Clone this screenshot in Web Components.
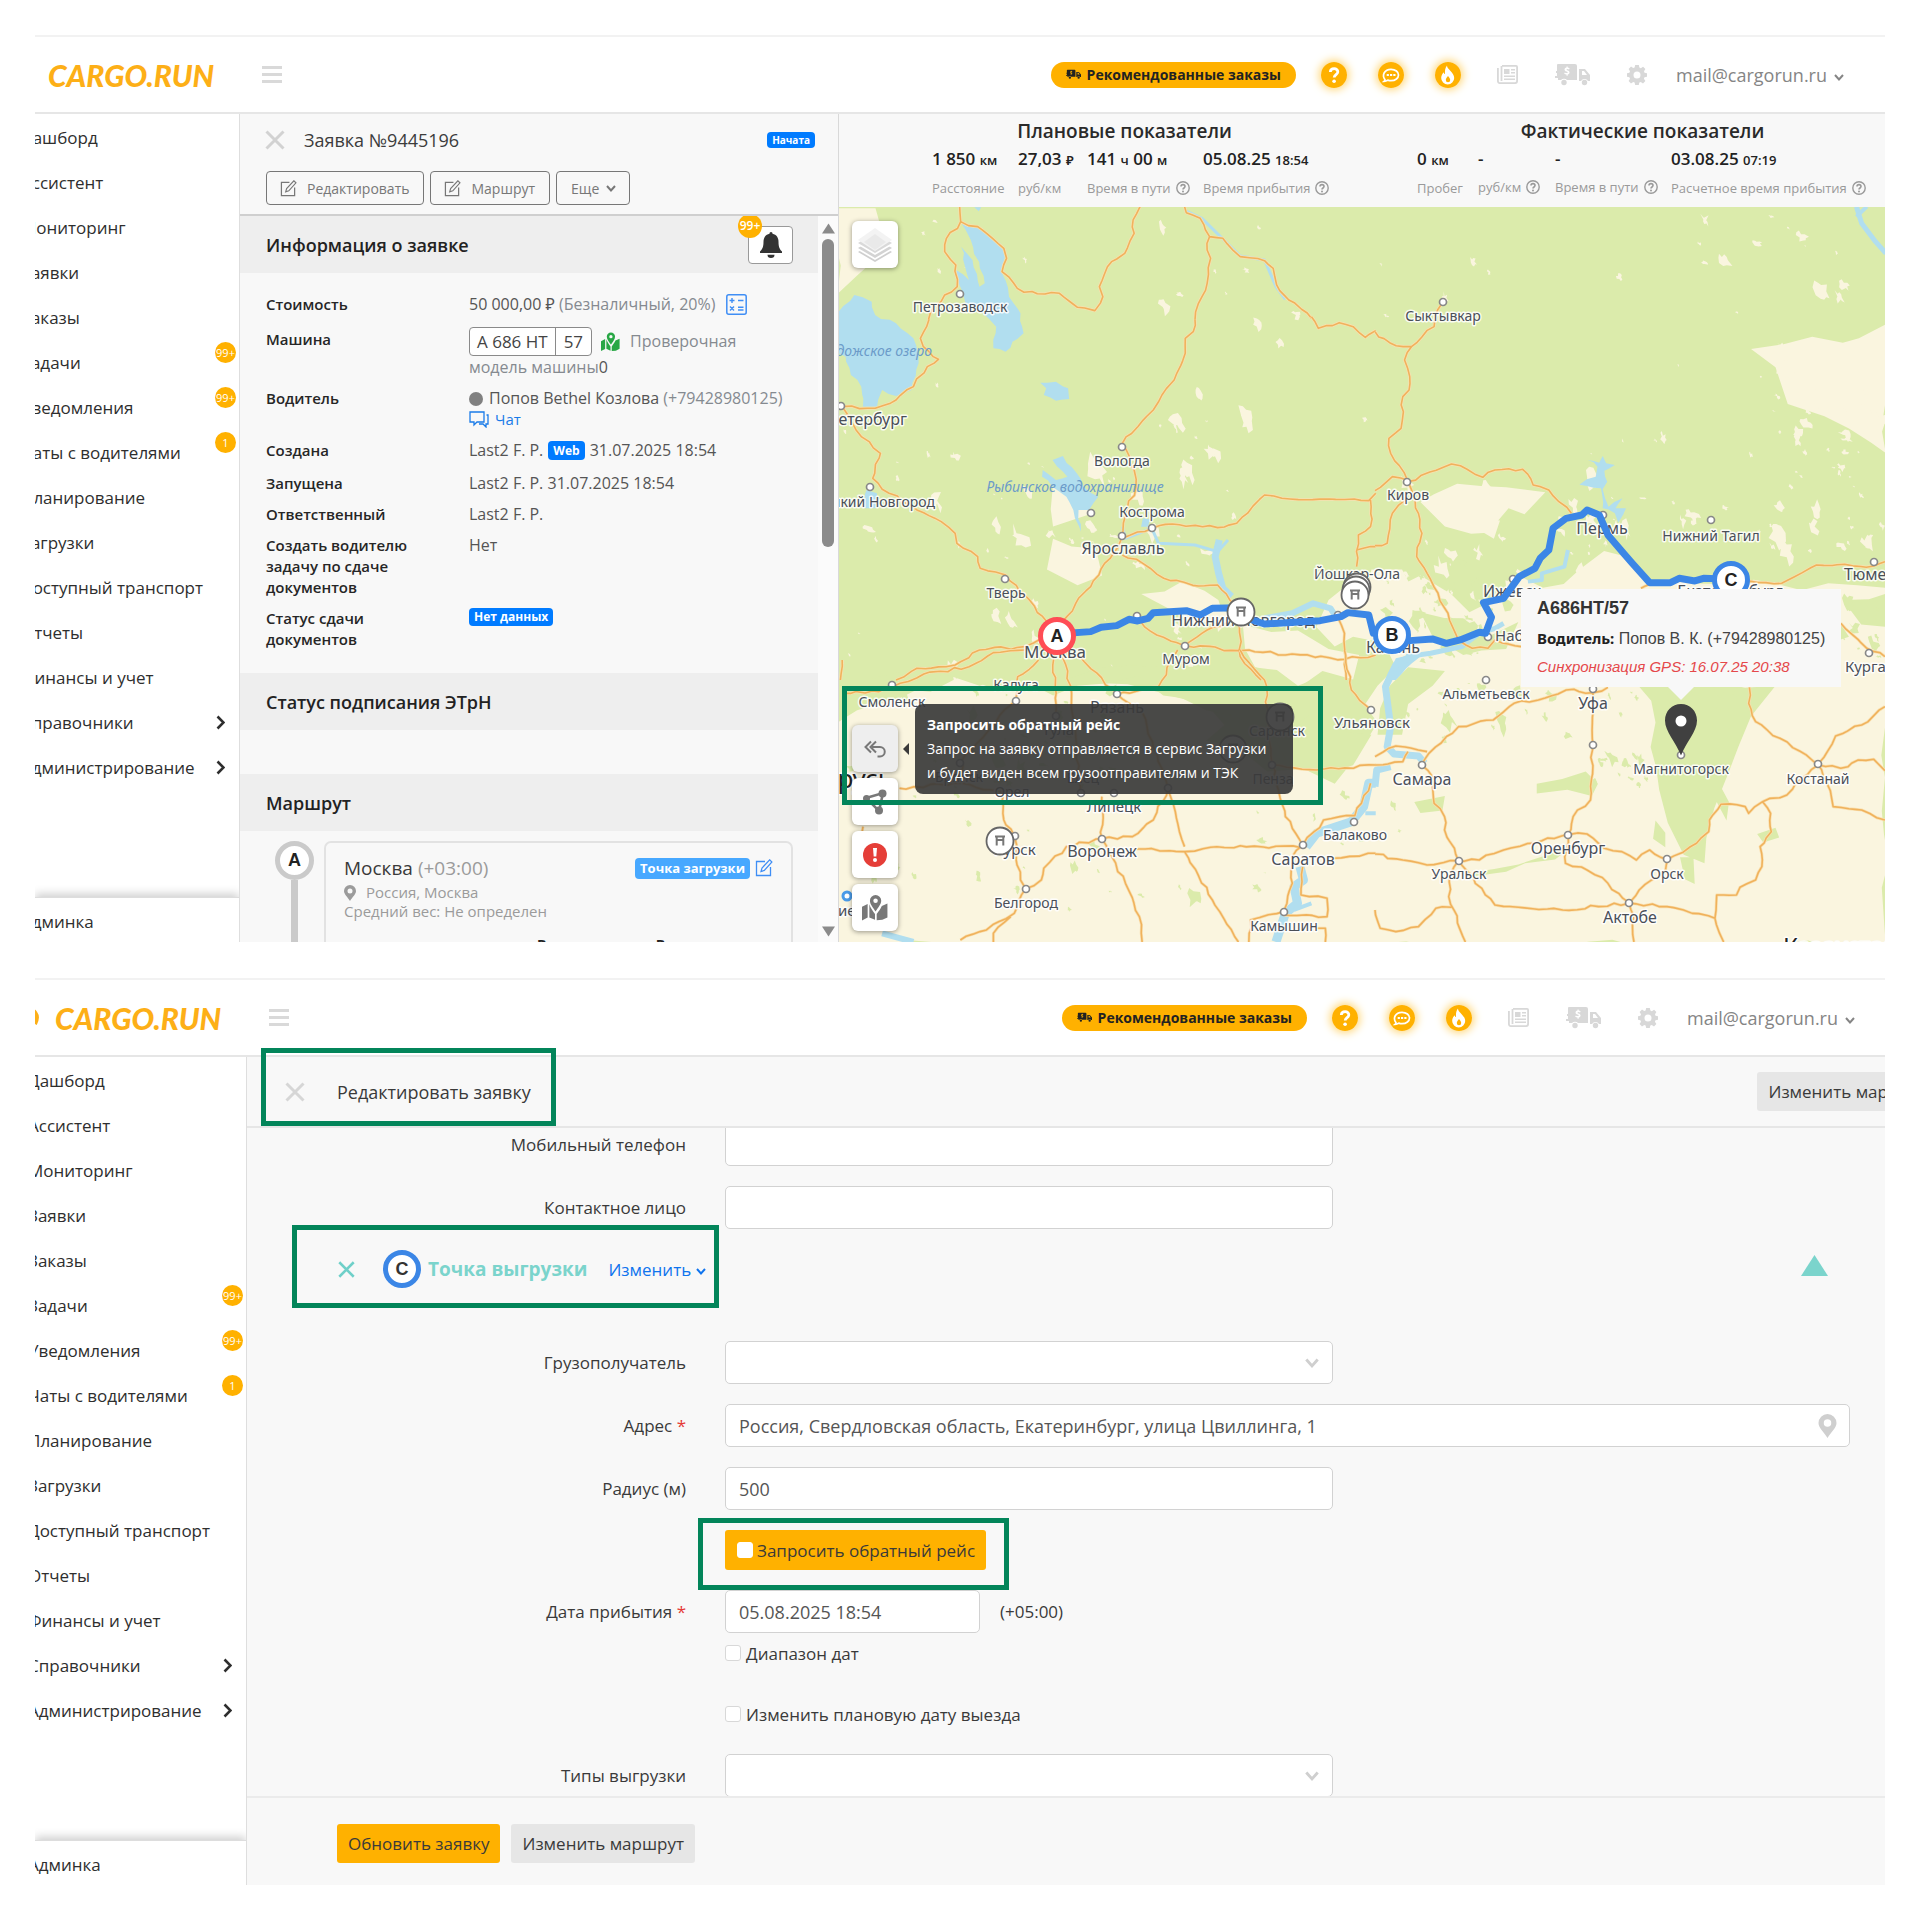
<!DOCTYPE html>
<html lang="ru">
<head>
<meta charset="utf-8">
<title>CARGO.RUN</title>
<style>
*{box-sizing:border-box}
body{margin:0;padding:35px;background:#fff;color:#2b2b2b;font-family:"Open Sans","Noto Sans",sans-serif;font-size:17px;display:flex;flex-direction:column;gap:36px}
app-shot.order{--crop:14px;--side:205px;--head-right:41px;--logo-pad:13px}
app-shot.edit{--crop:7px;--side:212px;--head-right:30px;--logo-pad:20px}
</style>
</head>
<body>
<app-shot class="order">
  <top-bar slot="head"></top-bar>
  <side-nav></side-nav>
  <order-panel></order-panel>
  <map-pane></map-pane>
  <mark-frame slot="marks" style="left:807px;top:651px;width:481px;height:119px"></mark-frame>
</app-shot>
<app-shot class="edit">
  <top-bar slot="head"></top-bar>
  <side-nav></side-nav>
  <edit-form></edit-form>
  <mark-frame slot="marks" style="left:226px;top:70px;width:295px;height:78px"></mark-frame>
  <mark-frame slot="marks" style="left:257px;top:247px;width:427px;height:83px"></mark-frame>
  <mark-frame slot="marks" style="left:663px;top:540px;width:311px;height:72px"></mark-frame>
</app-shot>

<script>
const BASE = '*{box-sizing:border-box}button,input,select{font:inherit;color:inherit;margin:0}button{cursor:pointer}a{color:inherit;text-decoration:none}';
function define(name, html) {
  customElements.define(name, class extends HTMLElement {
    constructor() {
      super();
      this.attachShadow({mode: 'open'}).innerHTML = '<style>' + BASE + '</style>' + (typeof html === 'function' ? html(this) : html);
    }
  });
}

/* ---------- icons ---------- */
const MAP_ICON = '<path fill="currentColor" d="M0 10.5 5 8v12l-5 2.500zM6.500 8.200c1 3.200 3 6 5 8.600V22l-5-2.200zM13 16.800c2-2.600 3.500-4.500 4.500-7l5-2.200v12.200L18 22l-5 .3z"/><path fill="currentColor" fill-rule="evenodd" d="M12 0a5 5 0 0 1 5 5c0 3-3 6.500-5 9.500C10 11.500 7 8 7 5a5 5 0 0 1 5-5zm0 3a2 2 0 1 0 0 4 2 2 0 0 0 0-4z"/>';
const TRUCK = '<path fill="currentColor" fill-rule="evenodd" d="M3 0h17a2 2 0 0 1 2 2v14H12a4 4 0 0 0-6 0H3v-2H0v-2h2V9H1V7h1V1a1 1 0 0 1 1-1zm8.500 2.500v1c-2.600.5-2.600 3.400 0 4 1.700.4 1.500 1.600.3 1.600-.8 0-1.400-.3-2-.7l-.6 1.300c.7.5 1.400.8 2.300.9v1.200h1.200v-1.200c2.400-.5 2.500-3.400 0-4-1.600-.4-1.400-1.500-.3-1.500.6 0 1.200.2 1.700.5l.5-1.300c-.6-.4-1.200-.6-1.900-.7V2.500zM24 5h6l5 6v6h-2a4 4 0 0 0-7 0h-2zm3 2v4h5l-3-4z"/><circle cx="9" cy="18.500" r="2.700" fill="currentColor"/><circle cx="29.500" cy="18.500" r="2.700" fill="currentColor"/>';
const ICONS = {
  menu: ['0 0 20 17', '<path fill="currentColor" d="M0 0h20v3H0zM0 7h20v3H0zM0 14h20v3H0z"/>'],
  close: ['0 0 20 20', '<path d="M1.500 1.500l17 17M18.500 1.500l-17 17" stroke="currentColor" stroke-width="3" fill="none"/>'],
  edit: ['0 0 18 18', '<path d="M10 2.500H1.500v14h14V8" fill="none" stroke="currentColor" stroke-width="1.300"/><path d="M6 12.500l1-3.500 7.700-8.200 2.200 2.200L9.300 11.400z" fill="none" stroke="currentColor" stroke-width="1.200"/>'],
  down: ['0 0 10 7', '<path d="M1 1l4 4.500L9 1" fill="none" stroke="currentColor" stroke-width="2"/>'],
  right: ['0 0 9 15', '<path d="M1.500 1.500l6 6-6 6" fill="none" stroke="currentColor" stroke-width="2.600"/>'],
  bell: ['0 0 22 26', '<path fill="currentColor" d="M11 0c1 0 1.500.8 1.500 1.800 4 .7 6 4 6 8 0 6 1.500 7.700 3.500 9.700V21H0v-1.500c2-2 3.500-3.700 3.500-9.700 0-4 2-7.300 6-8C9.500.8 10 0 11 0zM7.500 22.800h7a3.500 3.200 0 0 1-7 0z"/>'],
  calc: ['0 0 21 21', '<rect x=".8" y=".8" width="19.400" height="19.400" rx="2" fill="none" stroke="currentColor" stroke-width="1.500"/><path d="M3.500 6.500h5M6 4v5M12 6.500h5.500M4 12.500l4 4M8 12.500l-4 4M12 13.300h5.500M12 16h5.500" stroke="currentColor" stroke-width="1.400" fill="none"/>'],
  map: ['0 0 23 23', MAP_ICON],
  chat: ['0 0 20 17', '<path d="M1 1h14v10H8l-3 3v-3H1zM17.500 4H19v9h-2v3l-3-3h-4" fill="none" stroke="currentColor" stroke-width="1.300"/>'],
  pin: ['0 0 12 16', '<path fill="currentColor" fill-rule="evenodd" d="M6 0a6 6 0 0 1 6 6c0 3-3.500 6-6 10C3.500 12 0 9 0 6a6 6 0 0 1 6-6zm0 3.500a2.500 2.500 0 1 0 0 5 2.500 2.500 0 0 0 0-5z"/>'],
  truck: ['0 0 35 22', TRUCK],
  help: ['0 0 14 14', '<circle cx="7" cy="7" r="6.200" fill="none" stroke="currentColor" stroke-width="1.400"/><path d="M5 5.500C5 3 9 3 9 5.500 9 7 7 7 7 8.500" fill="none" stroke="currentColor" stroke-width="1.600"/><circle cx="7" cy="10.500" r="1" fill="currentColor"/>'],
  q: ['0 0 26 26', '<circle cx="13" cy="13" r="13" fill="#ffb100"/><path d="M9.300 10c.3-4.500 7.700-4.300 7.500 0-.1 2.600-3.600 2.700-3.600 5.500" fill="none" stroke="#fff" stroke-width="2.800"/><circle cx="13.100" cy="19.300" r="1.800" fill="#fff"/>'],
  msg: ['0 0 26 26', '<circle cx="13" cy="13" r="13" fill="#ffb100"/><path d="M7 17.800C3.500 13 6.500 7.300 13 7.300c4.500 0 7.500 2.600 7.500 5.700s-3 5.700-7.500 5.700c-1.200 0-2.200-.2-3.200-.6-1.300.9-2.700 1.200-3.800 1.200.6-.5.900-1 1-1.500z" fill="none" stroke="#fff" stroke-width="1.700"/><path d="M8.700 11.900h2.200v2.200H8.700zM12 11.900h2.200v2.200H12zM15.300 11.900h2.200v2.200h-2.200z" fill="#fff"/>'],
  fire: ['0 0 26 26', '<circle cx="13" cy="13" r="13" fill="#ffb100"/><path fill="#fff" fill-rule="evenodd" d="M12 3.500c-.2 3.800 7.200 6.800 7.200 12.500a6.500 6.500 0 0 1-13 0c0-2.300 1-4.200 2.500-5.800.2 1.200.7 1.700 1.300 1.900C9.800 9 10 6 12 3.500zm1 10.500c-1.100 1.400-2.200 2.400-2.200 4a2.200 2.200 0 0 0 4.400 0c0-1.600-1.100-2.600-2.200-4z"/>'],
  news: ['0 0 21 19', '<path fill="none" stroke="currentColor" stroke-width="1.800" d="M5 .9h14.100a1 1 0 0 1 1 1v14.200a2 2 0 0 1-2 2H3a2 2 0 0 1-2.100-2V3"/><path fill="none" stroke="currentColor" stroke-width="1.800" d="M4.500 1v15"/><path fill="currentColor" d="M7 4h5.500v5H7zM14 4h4v1.500h-4zM14 7h4v1.500h-4zM7 10.500h11V12H7zM7 13.500h11V15H7z"/>'],
  gear: ['0 0 20 20', '<path fill="currentColor" fill-rule="evenodd" d="M8.200 0h3.600l.6 2.600 1.400.6L16.100 1.800l2.300 2.300L17 6.300l.5 1.500 2.500.5v3.500l-2.500.5-.6 1.500 1.500 2.200-2.400 2.400-2.200-1.500-1.500.6-.5 2.500H8.200l-.6-2.500-1.400-.6L4 18.400 1.600 16 3 13.800l-.6-1.500L0 11.800V8.200l2.400-.5.600-1.400L1.600 4 4 1.600 6.200 3l1.400-.5zM10 6.500a3.500 3.500 0 1 0 0 7 3.500 3.500 0 0 0 0-7z"/>'],
  layers: ['0 0 36 36', '<path fill="#cfcfcf" d="M1 25l17-10 17 10-17 10z"/><path fill="#fff" d="M1 23l17-10 17 10-17 10z"/><path fill="#d3d3d3" d="M1 21l17-10 17 10-17 10z"/><path fill="#fff" d="M1 18l17-10 17 10-17 10z"/><path fill="#d9d9d9" d="M1 16l17-10 17 10-17 10z"/><path fill="#f3f3f3" d="M1 13L18 1l17 12-17 11z"/><path fill="#e9e9e9" d="M7 15l11-8 11 8-11 8z"/>'],
  back: ['0 0 22 18', '<path d="M7 1.500L1.500 7 7 12.500M12 1.500L6.500 7l5.500 5.500M8 7h8a4.500 4.500 0 0 1 0 9.500h-2.500" fill="none" stroke="currentColor" stroke-width="2"/>'],
  share: ['0 0 24 26', '<path d="M3 9L20 4l-4 18z" fill="none" stroke="currentColor" stroke-width="2.600"/><circle cx="3.500" cy="9.500" r="3.500" fill="currentColor"/><circle cx="19.500" cy="4.500" r="4" fill="currentColor"/><circle cx="16" cy="21.500" r="4" fill="currentColor"/>'],
  alert: ['0 0 24 24', '<circle cx="12" cy="12" r="12" fill="#e53e38"/><path d="M10 5h4l-.7 8.500h-2.600z" fill="#fff"/><circle cx="12" cy="17" r="2" fill="#fff"/>'],
  up: ['0 0 27 21', '<path fill="currentColor" d="M13.500 0L27 21H0z"/>']
};
define('ui-icon', el => {
  const [box, body] = ICONS[el.getAttribute('name')];
  const [, , w, h] = box.split(' ');
  return `<style>:host{display:inline-block;flex:none;width:${w}px;height:${h}px}svg{display:block;width:100%;height:100%}</style><svg viewBox="${box}" aria-hidden="true">${body}</svg>`;
});

/* ---------- frame of one screen ---------- */
define('app-shot', `<style>
:host{display:flex;flex-direction:column;position:relative;height:907px;overflow:hidden}
.body{display:flex;flex:1;min-height:0}
</style><slot name="head"></slot><div class="body"><slot></slot></div><slot name="marks"></slot>`);

define('mark-frame', `<style>:host{display:block;position:absolute;border:5px solid #03855a;pointer-events:none;z-index:5}</style>`);

define('top-bar', `<style>
:host{display:flex;align-items:center;height:79px;flex:none;border-top:2px solid #f2f2f2;border-bottom:2px solid #e6e6e6;padding-right:var(--head-right);background:#fff}
.mark{width:var(--logo-pad);height:20px;overflow:hidden;display:flex;justify-content:flex-start}
.mark svg{flex:none;margin-left:calc(var(--logo-pad) - 32px)}
.brand{display:flex;align-items:center;width:227px}
:host-context(.edit) .brand{width:234px}
b{font:italic 900 30px/36px Lato,sans-serif;color:#fdaf17}
.menu{border:0;background:none;padding:0;color:#d9d9d9;display:flex}
.right{margin-left:auto;display:flex;align-items:center;gap:31px;color:#d8d8d8}
.pill{border:0;background:#ffb100;color:#222;border-radius:13px;height:26px;padding:0 15px;margin-right:-6px;display:flex;align-items:center;gap:6px;font-weight:700;font-size:14px}
.pill ui-icon{width:15px;height:11px}
.round{border:0;padding:0;background:none;border-radius:50%;display:flex;box-shadow:0 0 9px 2px #ffd779}
.flat{border:0;padding:0 3px;background:none;display:flex;color:inherit}
.mail{display:flex;align-items:center;gap:7px;color:#858585;font-size:18px;margin-left:-5px}
.mail ui-icon{margin-top:5px}
.round+.flat{padding-left:5px}
</style>
<div class="brand"><span class="mark"><svg width="18" height="20" viewBox="0 0 18 20"><path d="M3 2c8-2 14 5 9 14" fill="none" stroke="#fdaf17" stroke-width="4"/></svg></span><b>CARGO.RUN</b></div>
<button class="menu" aria-label="Меню"><ui-icon name="menu"></ui-icon></button>
<div class="right">
<button class="pill"><ui-icon name="truck"></ui-icon>Рекомендованные заказы</button>
<button class="round" aria-label="Помощь"><ui-icon name="q"></ui-icon></button>
<button class="round" aria-label="Чат"><ui-icon name="msg"></ui-icon></button>
<button class="round" aria-label="Новинки"><ui-icon name="fire"></ui-icon></button>
<button class="flat" aria-label="Новости"><ui-icon name="news"></ui-icon></button>
<button class="flat" aria-label="Заказы"><ui-icon name="truck"></ui-icon></button>
<button class="flat" aria-label="Настройки"><ui-icon name="gear"></ui-icon></button>
<a class="mail" href="#">mail@cargorun.ru<ui-icon name="down"></ui-icon></a>
</div>`);

const NAV = [['Дашборд'],['Ассистент'],['Мониторинг'],['Заявки'],['Заказы'],['Задачи','99+'],['Уведомления','99+'],['Чаты с водителями','1'],['Планирование'],['Загрузки'],['Доступный транспорт'],['Отчеты'],['Финансы и учет'],['Справочники','>'],['Администрирование','>']];
define('side-nav', `<style>
:host{display:flex;flex-direction:column;flex:none;width:var(--side);border-right:1px solid #dedede;background:#fff;font-size:17px;color:#2e2e2e;overflow:hidden}
nav{display:flex;flex-direction:column;padding-top:1px}
a{display:flex;align-items:center;height:45px;margin-left:calc(0px - var(--crop));position:relative;white-space:nowrap}
i{position:absolute;right:3px;top:2px;width:21px;height:21px;border-radius:50%;background:#ffb100;color:#fff;font:normal 11px/21px "Open Sans",sans-serif;text-align:center}
ui-icon{position:absolute;right:14px;top:15px}
footer{margin-top:auto;border-top:1px solid #ddd;height:45px;box-shadow:0 -3px 9px rgba(0,0,0,.2)}
footer a{height:47px}
</style><nav>${NAV.map(([t,b]) => `<a href="#">${t}${b === '>' ? '<ui-icon name="right"></ui-icon>' : b ? `<i>${b}</i>` : ''}</a>`).join('')}</nav><footer><a href="#">Админка</a></footer>`);

/* ---------- order card ---------- */
define('order-panel', `<style>
:host{display:flex;flex-direction:column;flex:none;width:599px;background:#f8f8f8;border-right:1px solid #d9d9d9;min-height:0}
header{height:102px;flex:none;border-bottom:2px solid #cfcfcf;padding:12px 23px 0 26px;display:flex;flex-direction:column;gap:17px}
.t{display:flex;align-items:center;font-size:18px;line-height:28px;height:28px;color:#3c3c3c}
.t button{border:0;background:none;padding:0;color:#d2d2d2;display:flex;margin:0 19px 0 -1px}
.tag{background:#007bff;color:#fff;font-weight:700;border-radius:4px;font-size:12px;line-height:18px;padding:0 5px;display:inline-block}
.t .tag{margin-left:auto;font-size:10px;line-height:16px}
.b{display:flex;gap:6px}
.b button{height:34px;border:1px solid #777;border-radius:4px;background:none;color:#777;font-size:14px;display:flex;align-items:center;padding:0 14px 0 13px;gap:10px}
.b button:last-child{gap:7px;padding:0 13px 0 14px}
.b ui-icon[name=edit]{width:17px;height:17px}
.scroll{display:flex;flex:1;min-height:0}
.c{flex:1;min-width:0;overflow:hidden}
h2{margin:0;background:#eee;height:57px;padding:0 25px 0 26px;display:flex;align-items:center;justify-content:space-between;font-size:18px;font-weight:600;color:#222;position:relative}
.bell{width:45px;height:38px;border:1px solid #999;border-radius:4px;background:#fff;color:#333;display:flex;align-items:center;justify-content:center;position:relative;padding:0}
.bell i{position:absolute;left:-11px;top:-13px;width:24px;height:24px;border-radius:50%;background:#ffb100;color:#fff;font:normal 600 12px/24px "Open Sans",sans-serif}
dl{margin:0;padding:21px 0 23px 26px;display:grid;grid-template-columns:203px 1fr;row-gap:10px;font-size:16px;line-height:21px;color:#555}
dt{font-weight:600;font-size:15px;color:#262626;padding-right:40px}
dt.low{padding-top:4px}
dd{margin:0;color:#555;white-space:nowrap}
dd div{display:flex;align-items:center}
.g{color:#858a90}
.cost ui-icon{color:#3f8ef5;margin-left:11px;margin-block:-1px}
.car{padding:2px 0 1px}
.plate{border:1px solid #8a8a8a;border-radius:4px;background:#fff;height:29px;display:inline-flex;font-size:17px;line-height:27px;color:#444}
.plate span{padding:0 7px}.plate span+span{border-left:1px solid #8a8a8a;padding:0 8px}
.car ui-icon{width:19px;height:20px;color:#28a745;margin:0 10px 0 9px}
.dot{width:14px;height:14px;border-radius:50%;background:#808080;margin-right:6px}
.chat{color:#1a7be8;font-size:15px;display:flex;gap:6px;align-items:center}
.web{margin:0 5px;line-height:19px}
.made{padding-bottom:2px}
.gap{height:44px}
.route{display:flex;padding:10px 25px 0 35px;gap:10px;height:160px}
.line{width:39px;display:flex;flex-direction:column;align-items:center}
.line b{width:39px;height:39px;border:5px solid #cacaca;border-radius:50%;background:#fff;display:flex;align-items:center;justify-content:center;font:700 18px "Liberation Sans",sans-serif;color:#222;flex:none}
.line:after{content:"";width:7px;flex:1;background:#cacaca}
.card{flex:1;border:2px solid #e2e2e2;border-radius:7px;padding:10px 18px 0}
.h{display:flex;align-items:center;font-size:19px;line-height:30px;color:#3a3a3a;gap:5px}
.h span{color:#9b9b9b}.h .tag{margin-left:auto;background:#47a8ff;color:#fff;font-size:13px;line-height:21px;padding:0 5px}
.h ui-icon{color:#3f8ef5}
.s{color:#9b9b9b;font-size:15px;line-height:19px;display:flex;align-items:center;gap:10px}
.s ui-icon{height:16px}
.cols{display:flex;margin-top:14px;font-weight:700;font-size:14px;line-height:20px;color:#222;gap:74px;padding-left:193px}
.bar{width:20px;background:#fbfbfb;display:flex;flex-direction:column;align-items:center;padding:7px 0 5px;color:#8b8b8b}
.bar ui-icon{width:13px;height:11px}
.bar ui-icon:last-child{transform:rotate(180deg);margin-top:auto}
.bar span{width:12px;height:308px;border-radius:6px;background:#8b8b8b;margin-top:5px}
</style>
<header><div class="t"><button aria-label="Закрыть"><ui-icon name="close"></ui-icon></button>Заявка №9445196<span class="tag">Начата</span></div>
<div class="b"><button><ui-icon name="edit"></ui-icon>Редактировать</button><button><ui-icon name="edit"></ui-icon>Маршрут</button><button>Еще<ui-icon name="down"></ui-icon></button></div></header>
<div class="scroll"><div class="c">
<h2>Информация о заявке<button class="bell" aria-label="Уведомления"><i>99+</i><ui-icon name="bell"></ui-icon></button></h2>
<dl>
<dt>Стоимость</dt><dd><div class="cost">50 000,00 ₽&nbsp;<span class="g">(Безналичный, 20%)</span><ui-icon name="calc"></ui-icon></div></dd>
<dt class="low">Машина</dt><dd><div class="car"><span class="plate"><span>А 686 НТ</span><span>57</span></span><ui-icon name="map"></ui-icon><span class="g">Проверочная</span></div><div><span class="g">модель машины</span>0</div></dd>
<dt>Водитель</dt><dd><div><span class="dot"></span>Попов Bethel Козлова&nbsp;<span class="g">(+79428980125)</span></div><a class="chat" href="#"><ui-icon name="chat"></ui-icon>Чат</a></dd>
<dt>Создана</dt><dd class="made"><div>Last2 F. P.<span class="tag web">Web</span>31.07.2025 18:54</div></dd>
<dt>Запущена</dt><dd>Last2 F. P. 31.07.2025 18:54</dd>
<dt>Ответственный</dt><dd>Last2 F. P.</dd>
<dt>Создать водителю задачу по сдаче документов</dt><dd>Нет</dd>
<dt>Статус сдачи документов</dt><dd><div><span class="tag">Нет данных</span></div></dd>
</dl>
<h2>Статус подписания ЭТрН</h2><div class="gap"></div><h2>Маршрут</h2>
<div class="route"><div class="line"><b>A</b></div><div class="card"><div class="h">Москва <span>(+03:00)</span><span class="tag">Точка загрузки</span><ui-icon name="edit"></ui-icon></div>
<div class="s"><ui-icon name="pin"></ui-icon>Россия, Москва</div><div class="s">Средний вес: Не определен</div><div class="cols"><span>Въезд</span><span>Выезд</span></div></div></div>
</div><div class="bar"><ui-icon name="up"></ui-icon><span></span><ui-icon name="up"></ui-icon></div></div>`);

/* ---------- map ---------- */
define('stat-item', el => `<style>
:host{display:block}
p{margin:0;font-weight:600;font-size:17px;line-height:28px;color:#222;white-space:nowrap}
p ::slotted(small){font-size:13px}
span{display:flex;align-items:center;gap:5px;margin-top:4px;font-size:13px;line-height:20px;color:#9a9a9a;white-space:nowrap}
</style><p><slot></slot></p><span>${el.getAttribute('label')}${el.hasAttribute('help') ? '<ui-icon name="help"></ui-icon>' : ''}</span>`);

const at = (x, y) => `transform="translate(${x} ${y}) scale(.3476 .3333)"`;
const ROADS = [
 [830,20,'M373 560L376 605L335 655L330 695L362 735L366 800L330 825L300 860L283 900 M376 605L425 620L500 685L508 715L495 755L558 817L660 820L712 862L762 872L785 830L775 800L810 725L848 700L875 640L872 600L892 560 M1020 560L1025 578L1065 595L1092 650L1130 655L1180 710L1250 722L1275 745L1285 795L1320 840L1385 895 M1092 650L1085 690L1095 715L1085 790L1060 850L1050 900'],
 [830,280,'M285 118L278 140L260 175L285 215L312 238L280 260L240 320L190 360L130 385L35 380L75 450L145 520L123 595L170 640L250 690L320 725L360 760L365 790L425 830L432 865L505 885L560 945L650 1060 M1050 118L1045 155L1022 175L1022 220L990 300L955 345L930 390L841 490L875 570L880 620L855 690L841 768L830 800L790 850L750 920L715 955L650 1060 M841 775L926 745L985 732L1115 743L1170 730L1250 645L1300 655L1550 662L1570 640 M841 825L900 850L960 895L1060 918L1115 915L1150 960L1182 995 M1385 110L1405 145L1465 128L1505 140L1540 172L1570 152 M650 1060L560 1100L430 1110L360 1155L250 1165L190 1200 M880 1010L940 1065L1020 1097L1180 1112L1480 1138L1570 1125 M1020 1097L1085 1050L1182 1010L1180 1130L1240 1200 M1460 1010L1480 1060L1485 1200 M1555 660L1555 740L1520 765L1515 860 M1515 810L1570 800'],
 [1375,280,'M0 155L45 190L105 200L170 140L180 90L196 65 M105 200L85 240L100 290L98 330L80 350L75 445L40 475L45 520L93 600L125 700L135 760L120 830L150 880L210 1000L240 1080 M93 605L220 552L310 592L345 570L425 568L455 615L500 630L565 700 M0 632L50 590L93 600 M93 640L50 700L35 790L0 797 M1040 905L1170 910L1270 855L1435 858L1467 845 M765 925L800 910 M1340 1030L1415 1105L1467 1130 M240 1080L280 1105L325 1105L345 1080L420 1100'],
 [830,650,'M560 0L470 8L400 50L270 72L180 110L140 125L35 130 M35 30L30 90 M640 0L650 190 M600 30L540 80L534 150L380 330L375 400L200 415 M665 0L695 130L720 430 M720 20L826 133L900 190L972 415L1020 590 M1000 0L945 110L826 133 M1180 0L1250 90L1272 340 M1480 0L1500 120L1555 180 M1272 345L1400 360L1570 345 M380 400L500 430L500 510L530 558L548 690L563 716L608 690L615 655L680 590L782 566L782 440 M782 566L870 560L930 510L972 415 M782 566L850 700L890 800L898 876 M880 597L1020 605L1095 592L1350 592 M1020 605L1100 750L1175 876 M1360 586L1310 500L1290 420L1272 345 M1360 586L1420 510L1510 497L1555 400 M1360 586L1330 620L1330 700L1305 785L1210 810L1205 876 M1360 650L1355 735L1430 745L1430 800L1305 795 M1400 835L1425 835L1425 876 M563 716L530 790L450 840L375 870 M520 800L470 850L470 876 M1450 625L1570 610 M95 530L90 560'],
 [1375,650,'M134 345L155 310L240 230L340 210L400 160L470 150L550 120L627 128L670 112 M627 118L627 285L620 450L570 500L556 554L548 640L610 660L670 700L731 758 M556 554L480 572L370 600L300 630L240 632L150 645L80 630L0 612 M134 345L165 380L170 460L200 500L200 540L240 632L345 765L540 780L731 760L840 770L978 805L1003 876 M240 632L215 680L212 740L260 876 M220 772L175 775L125 830L60 845L15 835L0 780 M556 554L610 552L660 595L710 605L752 630L790 600L841 628L925 580L960 545L962 510L995 463L1065 470L1075 490L1115 455L1185 435L1210 400L1275 345L1165 265L1095 215L1075 160L1077 112 M841 628L835 665L760 720L731 760L745 800L745 876 M1115 455L1138 490L1140 545L1108 590L1113 650L1095 690L1050 712L1040 735L983 735L978 805 M1275 342L1325 258L1400 225L1467 170 M1275 345L1340 355L1390 330L1435 328L1467 362 M1275 345L1300 400L1318 470L1400 480L1467 510 M0 320L60 288L150 305 M0 345L80 335L95 305']
];
/* breaks long straight road segments into small natural bends */
let seed = 7;
const rnd = () => (seed = (seed * 16807) % 2147483647) / 2147483647;
function bend(d) {
  return d.split(' M').map((part, n) => {
    const pts = part.replace('M', '').split('L').map(p => p.trim().split(/\s+/).map(Number));
    let out = 'M' + pts[0].join(' ');
    for (let i = 1; i < pts.length; i++) {
      const [ax, ay] = pts[i - 1], [bx, by] = pts[i], len = Math.hypot(bx - ax, by - ay), k = Math.max(1, Math.round(len / 22));
      for (let j = 1; j < k; j++) out += 'L' + (ax + (bx - ax) * j / k + (rnd() - .5) * 9).toFixed(1) + ' ' + (ay + (by - ay) * j / k + (rnd() - .5) * 9).toFixed(1);
      out += 'L' + bx + ' ' + by;
    }
    return out;
  }).join(' ');
}
const WATER = [
 [830,20,'M378 610L430 625L490 670L505 700L495 760L515 830L548 880L557 940L525 965L505 995L470 985L478 920L440 880L390 850L363 750L400 780L377 680L410 720L430 800L445 790L405 660Z M25 875L70 825L120 845L130 885L190 910L240 955L255 1030L235 1110L190 1128L150 1110L135 1160L95 1160L90 1100L60 1065L45 1010L25 1000Z M415 562L435 562L428 574Z'],
 [830,280,'M605 308L650 305L685 325L688 357L650 362L615 345L622 325Z M640 540L670 528L710 580L740 630L772 650L745 690L715 690L722 755L700 690L680 650L640 620L610 590L612 570L650 600L683 590Z M105 630L135 640L130 685L100 685Z M900 715L920 718L915 740L895 740Z'],
 [1375,280,'M612 540L645 548L655 528L665 550L690 555L660 572L668 605L655 628L672 680L712 655L692 685L722 685L700 728L690 700L655 685L650 625L588 614L635 590L640 560Z M30 1200L60 1135L110 1120L130 1130L90 1165L60 1200Z']
];
const RIVERS = [
 [830,20,'M1022 572L1070 595L1180 708L1250 720L1283 800L1310 838',3],
 [830,280,'M1120 780L1108 830L1118 880L1130 925L1155 950',7],[830,280,'M841 740L850 775L926 745L945 790L1050 795L1115 815L1145 780',3],[830,280,'M1250 1015L1330 1000L1390 970L1440 985L1455 1010',6],
 [1375,280,'M370 1030L345 1045L300 1060L250 1100L160 1120L90 1130',5],[1375,280,'M440 905L480 900L480 880L545 860L555 810',4],
 [1375,650,'M110 15L60 45L30 110L45 230L35 290L55 312L125 318L143 340',7],[1375,650,'M45 350L5 360L0 410',7],
 [830,650,'M1570 400L1550 400L1535 470L1500 515L1400 550L1370 590',9],[830,650,'M1352 650L1362 690L1335 710L1345 760L1310 790L1283 876',9],[830,650,'M1335 780L1385 760M1540 490L1570 490',4],[830,650,'M150 850L240 876',6],[1375,20,'M1385 560L1400 610L1440 665L1470 700',5],[1375,20,'M1385 590L1415 560',4]
];
const BIG = [
 ['#faf5df','M684 590L705 575L730 562L760 565L785 552L810 562L850 560L900 558L945 565L985 575L1000 592L985 605L1010 610L1035 630L1065 628L1090 640L1110 615L1125 590L1110 570L1125 560L1140 545L1130 525L1105 520L1090 528L1075 512L1085 490L1110 470L1140 480L1160 470L1185 485L1200 500L1220 490L1240 470L1260 480L1290 465L1310 450L1330 455L1345 475L1540 480L1540 772L684 772Z'],
 ['#faf5df','M1015 510L1060 515L1085 530L1110 535L1105 555L1080 548L1060 562L1025 545Z M932 485L965 475L995 490L1000 505L975 510L960 500Z M685 170L715 170L722 195L700 225L684 240Z'],
 ['#faf5df','M1190 395L1230 398L1262 402L1245 420L1232 415L1215 435L1180 430L1160 410Z M1120 465L1145 465L1162 505L1140 510L1120 500Z M1430 285L1480 275L1505 280L1540 265L1540 370L1510 350L1490 340L1460 330L1450 300Z M860 440L895 448L900 470L880 478L855 465Z M860 395L885 400L890 420L860 430Z M1195 425L1225 425L1220 440Z'],
 ['#dbebab','M1338 560L1450 560L1430 585L1412 630L1400 660L1392 705L1375 698L1362 672L1355 645L1348 610L1352 590Z M1372 700L1383 700L1384 722L1376 718Z M1352 670L1360 680L1360 692L1350 685Z M1404 640L1412 655L1410 670L1402 655Z'],
 ['#dbebab','M684 560L720 552L760 545L840 535L870 555L900 545L950 545L1000 548L1010 535L1060 560L1085 550L1125 560L1115 575L1085 575L1060 590L1075 605L1050 610L1030 600L1010 585L985 580L965 570L950 568L930 552L905 558L880 560L860 568L835 555L800 560L770 550L735 570L700 580L684 590Z M1040 600L1085 590L1120 600L1105 625L1070 630L1050 620Z'],
 ['#dbebab','M1135 560L1150 545L1180 548L1170 560L1150 575L1145 600L1125 600Z M1160 500L1195 505L1215 520L1240 508L1230 530L1195 535L1170 520Z M1460 500L1500 505L1510 520L1480 530Z M1505 490L1540 485L1540 512L1520 510Z M1255 640L1295 630L1305 640L1300 650L1280 645L1255 648Z M1205 712L1240 706L1285 690L1270 702L1230 712L1200 716Z M1155 655L1180 650L1178 662L1160 664Z M1435 681L1450 676L1453 684L1440 688Z']
];
function rough(d) {
  return d.split(' M').map(p => 'M' + bend(p.replace('M', '').replace('Z', '').replace(/^/, 'M') + 'L' + p.replace('M', '').split('L')[0]).slice(1) + 'Z').join(' ');
}
function flecks(n, x0, y0, x1, y1, big) {
  let d = '';
  for (let i = 0; i < n; i++) {
    const cx = x0 + rnd() * (x1 - x0), cy = y0 + rnd() * (y1 - y0), s = 1 + rnd() * rnd() * big, tilt = rnd() * 1.6 + .5;
    for (let k = 0; k < 11; k++) {
      const a = k / 11 * 6.283, r = s * (.25 + rnd() * 1.1);
      d += (k ? 'L' : 'M') + (cx + Math.cos(a) * r + Math.sin(a) * s * .4).toFixed(1) + ' ' + (cy + Math.sin(a) * r * tilt).toFixed(1);
    }
    d += 'Z';
  }
  return d;
}
const CREAM = flecks(26,845,215,1300,450,7)+flecks(45,850,450,1240,590,10)+flecks(12,1300,215,1750,440,6)+flecks(50,1760,340,1885,560,8)+flecks(45,1400,480,1680,610,11)+flecks(12,1700,215,1885,300,8)+flecks(14,1560,440,1885,560,8)+flecks(18,845,600,1240,680,8);
const GREEN = flecks(38,850,690,1130,790,9)+flecks(16,850,790,1130,930,8)+flecks(6,1130,790,1300,930,7)+flecks(30,1390,600,1560,720,9)+flecks(8,1440,690,1600,770,8)+flecks(18,1590,690,1650,790,7)+flecks(10,1690,680,1740,720,8)+flecks(24,1380,560,1500,650,9)+flecks(8,1200,780,1400,870,6)+flecks(14,1840,600,1885,660,9);
const DOTS = [[960,294],[841,406],[870,487],[1122,447],[1091,513],[1152,528],[1122,536],[1005,579],[1137,616],[1185,646],[1338,615],[1443,302],[1407,482],[1603,515],[1711,520],[1513,579],[1488,637],[1874,562],[1869,653],[1486,680],[1593,689],[1593,745],[1681,755],[1422,765],[1818,764],[1568,835],[1459,861],[1667,859],[1629,903],[1371,710],[1016,701],[1117,694],[892,685],[1272,765],[1114,793],[1081,793],[1168,788],[1056,716],[960,763],[1015,836],[1102,839],[1026,889],[1303,845],[1354,822],[1284,912]];
const CITIES = [['Петрозаводск',960,307,14],['Вологда',1122,461,14],['Кострома',1152,512,14],['Ярославль',1123,549,16],['Тверь',1006,593,14],['Нижний Новгород',1243,621,16],['Муром',1186,659,14],['Москва',1055,652,17],['Йошкар-Ола',1357,574,14],['Казань',1393,648,16],['Сыктывкар',1443,316,14],['Киров',1408,495,14],['Пермь',1602,529,16],['Нижний Тагил',1711,536,14],['Ижевск',1512,592,16],['Екатеринбург',1730,592,16],['Альметьевск',1486,694,14],['Уфа',1593,704,16],['Магнитогорск',1681,769,14],['Самара',1422,780,16],['Костанай',1818,779,14],['Оренбург',1568,849,16],['Уральск',1459,874,14],['Орск',1667,874,14],['Актобе',1630,918,16],['Ульяновск',1372,723,15],['Калуга',1016,685,14],['Рязань',1117,708,16],['Смоленск',892,702,14],['Саранск',1277,731,14],['Пенза',1273,779,14],['Орел',1012,792,14],['Липецк',1114,807,15],['Тула',1058,730,15],['Брянск',959,777,14],['Елец',1083,778,14],['Курск',1015,850,15],['Воронеж',1102,852,16],['Белгород',1026,903,14],['Саратов',1303,860,16],['Балаково',1355,835,14],['Камышин',1284,926,14]];
const hub = (x, y) => `<g transform="translate(${x} ${y})"><circle r="13.500" fill="#fff" stroke="#666" stroke-width="1.800"/><path d="M-5-4.500H5M-4-1H4M-3.300-4.500V4.500M3.300-4.500V4.500" stroke="#777" stroke-width="2" fill="none"/></g>`;
const stop = (t, x, y, c) => `<g transform="translate(${x} ${y})"><circle r="16.500" fill="#fff" stroke="${c}" stroke-width="5"/><text y="6" text-anchor="middle" font-family="Liberation Sans" font-weight="700" font-size="18" fill="#222">${t}</text></g>`;
const line = (x, y, d, c, w) => `<g ${at(x, y)}><path d="${d}" fill="none" stroke="${c}" stroke-width="${w}" stroke-linejoin="round" vector-effect="non-scaling-stroke"/></g>`;

define('map-canvas', `<style>:host{display:block;position:absolute;inset:0;overflow:hidden}svg{display:block;width:100%;height:100%}
.l{font-family:"Noto Sans",sans-serif;text-anchor:middle;fill:#4a4f58;stroke:#fff;stroke-opacity:.85;stroke-width:3px;paint-order:stroke;stroke-linejoin:round}</style>
<svg viewBox="839 207 1046 735" preserveAspectRatio="xMinYMin slice">
<rect x="839" y="207" width="1046" height="735" fill="#dbebab"/>
${BIG.slice(0,3).map(([c,d]) => `<path transform="scale(1.22449)" fill="${c}" d="${rough(d)}"/>`).join('')}
<path d="${CREAM}" fill="#faf5df"/>
${BIG.slice(3).map(([c,d]) => `<path transform="scale(1.22449)" fill="${c}" d="${rough(d)}"/>`).join('')}
<path d="${GREEN}" fill="#dbebab"/>
${WATER.map(([x,y,d]) => `<g ${at(x,y)}><path d="${rough(d)}" fill="#b1deef"/></g>`).join('')}
${RIVERS.map(([x,y,d,w]) => line(x,y,d,'#b1deef',w)).join('')}
${ROADS.map(([x,y,d]) => { const b = bend(d); return line(x,y,b,'#f9e0b0',3) + line(x,y,b,'#f0b25c',1.6); }).join('')}
${DOTS.map(([x,y]) => `<circle cx="${x}" cy="${y}" r="3.500" fill="#fff" stroke="#888" stroke-width="1.700"/>`).join('')}
<circle cx="847" cy="896" r="4" fill="#fff" stroke="#4a9be8" stroke-width="3"/>
<g class="l">${CITIES.map(([t,x,y,s]) => `<text x="${x}" y="${y + Math.round(s / 3)}" font-size="${s}">${t}</text>`).join('')}
<text x="907" y="425" font-size="16" style="text-anchor:end">Санкт-Петербург</text>
<text x="935" y="507" font-size="14" style="text-anchor:end">Великий Новгород</text>
<text x="1844" y="580" font-size="16" style="text-anchor:start">Тюмень</text>
<text x="1845" y="672" font-size="15" style="text-anchor:start">Курган</text>
<text x="1495" y="641" font-size="15" style="text-anchor:start">Набережные Челны</text>
<text x="838" y="916" font-size="15" style="text-anchor:start">иев</text>
<text x="892" y="788" font-size="26" fill="#222" style="text-anchor:end">Беларусь</text>
<text x="1783" y="955" font-size="24" fill="#222" style="text-anchor:start">Казахстан</text></g>
<g font-family="Noto Sans" font-style="italic" fill="#6c9bc9"><text x="932" y="356" font-size="14" text-anchor="end">Ладожское озеро</text><text x="1075" y="492" font-size="14" text-anchor="middle">Рыбинское водохранилище</text></g>
${line(830,280,'M652 1062L750 1055L780 1042L825 1037L860 1018L885 1023L915 1015L930 998L1025 992L1065 1005L1100 985L1182 983L1215 1020L1250 1032L1410 1022L1470 1010L1490 998L1550 1005L1563 1060L1616 1064L1668 1082L1733 1077L1773 1090L1813 1080L1868 1057L1886 1060L1903 1012L1880 968L1938 955L1983 890L2028 865L2043 835L2068 810L2080 745L2118 715L2163 705L2178 690L2213 705L2238 765L2283 820L2308 850L2358 908L2418 908L2443 895L2488 903L2513 895L2591 898','#3b86e6',7)}
${hub(1241,612)}${hub(1357,587)}${hub(1356,590)}${hub(1355,595)}${hub(1280,717)}${hub(1233,749)}${hub(1000,841)}
${stop('A',1057,636,'#ff4d55')}${stop('B',1392,635,'#3b86e6')}${stop('C',1731,580,'#3b86e6')}
<path d="M1681 704c9 0 16 7 16 16.500 0 11-11 22-16 35-5-13-16-24-16-35 0-9.500 7-16.500 16-16.500z" fill="#404040"/><circle cx="1681" cy="721" r="5.500" fill="#fff"/>
</svg>`);

define('map-pane', `<style>
:host{display:flex;flex-direction:column;flex:1;min-width:0}
.stats{height:93px;flex:none;background:#f8f8f8;display:flex;justify-content:flex-end;gap:86px;padding:4px 17px 0 0}
section{flex:none}
h3{margin:0;text-align:center;font-weight:600;font-size:19px;line-height:27px;color:#2a2a2a}
.p h3{padding-right:14px}
.r{display:flex;gap:13px}
stat-item:nth-child(1){min-width:73px}stat-item:nth-child(2){min-width:56px}stat-item:nth-child(3){min-width:103px}stat-item:nth-child(4){min-width:128px}
.f stat-item:nth-child(1){min-width:48px}.f stat-item:nth-child(2){min-width:64px}.f stat-item:nth-child(4){min-width:197px}
.map{flex:1;position:relative;overflow:hidden}
.tools{position:absolute;left:13px;top:14px;display:flex;flex-direction:column;gap:6px}
.tools.low{top:518px}
.tools button{width:46px;height:47px;border:0;border-radius:6px;background:#fff;box-shadow:0 1px 5px rgba(0,0,0,.4);display:flex;align-items:center;justify-content:center;color:#787878;padding:0}
.tools .on{background:#eee}
.tools ui-icon[name=map]{width:28px;height:26px}
.tip{position:absolute;left:76px;top:497px;height:90px;border-radius:8px;background:rgba(58,58,58,.92);color:#fff;line-height:24px;padding:9px 12px;white-space:nowrap;width:378px;font-size:14px}
.tip b{display:block}
.tip:before{content:"";position:absolute;left:-12px;top:39px;border:6px solid transparent;border-left:0;border-right:6px solid #3a3a3a}
.pop{position:absolute;left:682px;top:382px;width:320px;height:98px;background:#f8f8f8;padding:5px 16px;font:16px/28px "Liberation Sans",sans-serif;color:#444;white-space:nowrap}
.pop:after{content:"";position:absolute;left:147px;top:98px;border:13px solid transparent;border-top-color:#f8f8f8;border-bottom:0}
.pop b{display:block;font-size:18px;color:#333;line-height:28px}
.pop strong{font:700 15px "Noto Sans",sans-serif;color:#222}
.pop p{margin:3px 0 0}.pop em{color:#e5484b;display:block;font-size:15px;line-height:28px}
</style>
<div class="stats">
<section class="p"><h3>Плановые показатели</h3><div class="r"><stat-item label="Расстояние">1 850 <small>км</small></stat-item><stat-item label="руб/км">27,03 <small>₽</small></stat-item><stat-item label="Время в пути" help>141 <small>ч</small> 00 <small>м</small></stat-item><stat-item label="Время прибытия" help>05.08.25 <small>18:54</small></stat-item></div></section>
<section class="f"><h3>Фактические показатели</h3><div class="r"><stat-item label="Пробег">0 <small>км</small></stat-item><stat-item label="руб/км" help>-</stat-item><stat-item label="Время в пути" help>-</stat-item><stat-item label="Расчетное время прибытия" help>03.08.25 <small>07:19</small></stat-item></div></section>
</div>
<div class="map"><map-canvas></map-canvas>
<div class="tools"><button aria-label="Слои"><ui-icon name="layers"></ui-icon></button></div>
<div class="tools low"><button class="on" aria-label="Обратный рейс"><ui-icon name="back"></ui-icon></button><button aria-label="Поделиться"><ui-icon name="share"></ui-icon></button><button aria-label="Проблемы"><ui-icon name="alert"></ui-icon></button><button aria-label="Карта"><ui-icon name="map"></ui-icon></button></div>
<div class="tip" role="tooltip"><b>Запросить обратный рейс</b>Запрос на заявку отправляется в сервис Загрузки<br>и будет виден всем грузоотправителям и ТЭК</div>
<div class="pop"><b>А686НТ/57</b><p><strong>Водитель:</strong> Попов В. К. (+79428980125)</p><em>Синхронизация GPS: 16.07.25 20:38</em></div>
</div>`);

/* ---------- edit form ---------- */
define('edit-form', `<style>
:host{display:flex;flex-direction:column;flex:1;min-width:0;background:#f8f8f8;color:#3a3a3a;font-size:17px}
header{height:71px;flex:none;border-bottom:2px solid #e6e6e6;display:flex;align-items:center;padding-left:38px;font-size:18px;overflow:hidden}
.x{border:0;background:none;padding:0;display:flex;color:#d6d6d6}
header .x{margin-right:32px}
.btn{border:0;border-radius:3px;height:39px;padding:0 11px;background:#e6e6e6;color:#3a3a3a;font-size:17px;white-space:nowrap}
header .btn{margin-left:auto;margin-right:-56px}
.main{background:#ffb100}
form{flex:1;min-height:0;overflow:hidden;display:block}
.in{margin-top:-5px;padding-right:35px}
.row{display:grid;grid-template-columns:439px 1fr;column-gap:39px;align-items:center;margin-bottom:20px}
.row>label:first-child{text-align:right}
em{color:#e53935;font-style:normal}
.f{position:relative;display:flex;align-items:center;width:54%}
.f.w{width:100%}
.f input,.f select{width:100%;height:43px;border:1px solid #d2d2d2;border-radius:5px;background:#fff;padding:0 13px;font-size:18px;color:#555;appearance:none}
.f ui-icon{position:absolute;right:13px;color:#cfcfcf}
.f ui-icon[name=down]{width:16px;height:10px}
.f ui-icon[name=pin]{width:19px;height:24px}
.point{display:flex;align-items:center;height:40px;margin-bottom:52px;padding:0 22px 0 91px}
.point .x{color:#6fd0c9;margin-right:28px}.point .x ui-icon{width:17px;height:17px}
.c{width:38px;height:38px;border:5px solid #3b86e6;border-radius:50%;background:#fff;display:flex;align-items:center;justify-content:center;font:700 18px "Liberation Sans",sans-serif;color:#333;margin-right:7px}
.point b{font-size:19px;color:#7bd4cc;margin-right:21px}
.point a{color:#0f74ee;display:flex;align-items:center;gap:5px}
.point a ui-icon{margin-top:4px}
.tri{border:0;background:none;padding:0 0 8px;margin-left:auto;display:flex;color:#7bd4cc}
.ask{background:#ffb100;border-radius:3px;height:40px;display:flex;align-items:center;gap:4px;padding:0 11px 0 12px}
input[type=checkbox]{appearance:none;width:16px;height:16px;border:1px solid #d8d8d8;border-radius:3px;background:#fff;flex:none}
.ask input{border-color:#fff}
.f.d{width:255px}
.date{display:flex;align-items:center;gap:20px}
.date-row{margin-bottom:9px}
.ck{display:flex;align-items:center;gap:5px;height:22px;margin-left:478px}
.ck+.ck{margin-top:39px;margin-bottom:29px}
footer{flex:none;height:89px;border-top:2px solid #ebebeb;display:flex;align-items:center;gap:11px;padding-left:90px;padding-top:3px}
.ask-row{margin:1px 0 20px 478px;display:flex}
</style>
<header><button class="x" aria-label="Закрыть"><ui-icon name="close"></ui-icon></button>Редактировать заявку<button class="btn">Изменить маршрут</button></header>
<form><div class="in">
<div class="row"><label for="ph">Мобильный телефон</label><span class="f"><input id="ph"></span></div>
<div class="row"><label for="ct">Контактное лицо</label><span class="f"><input id="ct"></span></div>
<div class="point"><button type="button" class="x" aria-label="Удалить точку"><ui-icon name="close"></ui-icon></button><span class="c">C</span><b>Точка выгрузки</b><a href="#">Изменить<ui-icon name="down"></ui-icon></a><button type="button" class="tri" aria-label="Свернуть"><ui-icon name="up"></ui-icon></button></div>
<div class="row"><label for="gp">Грузополучатель</label><span class="f"><select id="gp"><option></option></select><ui-icon name="down"></ui-icon></span></div>
<div class="row"><label for="ad">Адрес<em> *</em></label><span class="f w"><input id="ad" value="Россия, Свердловская область, Екатеринбург, улица Цвиллинга, 1"><ui-icon name="pin"></ui-icon></span></div>
<div class="row"><label for="rd">Радиус (м)</label><span class="f"><input id="rd" value="500"></span></div>
<div class="ask-row"><label class="ask"><input type="checkbox">Запросить обратный рейс</label></div>
<div class="row date-row"><label for="dt">Дата прибытия<em> *</em></label><span class="date"><span class="f d"><input id="dt" value="05.08.2025 18:54"></span>(+05:00)</span></div>
<label class="ck"><input type="checkbox">Диапазон дат</label>
<label class="ck"><input type="checkbox">Изменить плановую дату выезда</label>
<div class="row"><label for="tp">Типы выгрузки</label><span class="f"><select id="tp"><option></option></select><ui-icon name="down"></ui-icon></span></div>
</div></form>
<footer><button class="btn main">Обновить заявку</button><button class="btn">Изменить маршрут</button></footer>`);
</script>
</body>
</html>
